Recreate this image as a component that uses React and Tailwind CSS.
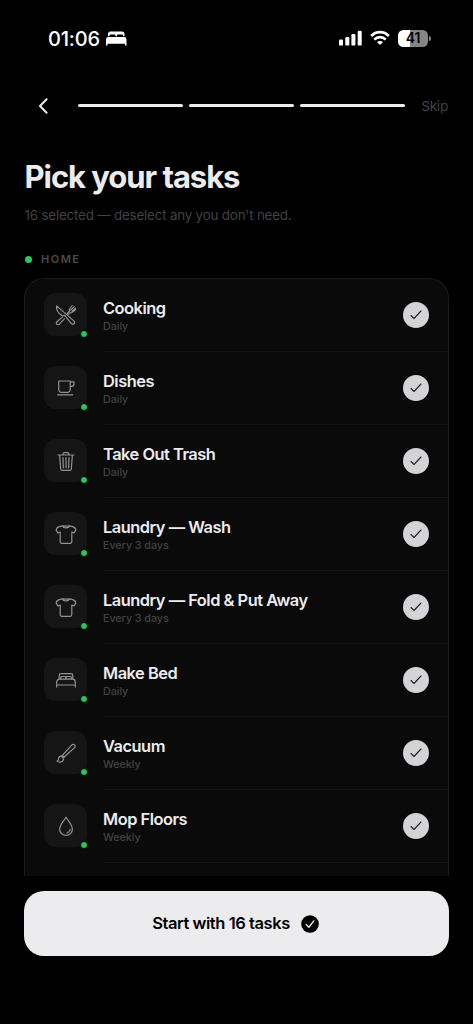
import React from "react";

const icons = {
  utensils: (
    <>
      <path d="M2.6 2.9C2 6.4 4.4 10.4 8.4 13L10.6 12.3L17.4 20.6a1.8 1.8 0 0 0 2.7-2.5Z" />
      <path d="M8.6 13.9L2.9 18.7a1.7 1.7 0 0 0 2.4 2.5L10.4 15.8" />
      <path d="M13.2 10.3L15.4 8.2C14.8 6.5 15.7 5.3 18.2 2.6M16.7 7.2L20 3.8M18 8.1L21.4 5.2M13.8 11.8L15.8 9.8C17.5 10.4 19 9.2 21.6 6.3" />
    </>
  ),
  cup: (
    <>
      <path d="M4.7 5H16.2V13.2A3.2 3.2 0 0 1 13 16.4H7.9A3.2 3.2 0 0 1 4.7 13.2ZM16.2 5.9H20V8.1A2.3 2.3 0 0 1 17.7 10.4H16.2M3.6 18.8H18.8" />
    </>
  ),
  trash: (
    <>
      <path d="M4.1 6H19.9M9.1 6V4.8A1.2 1.2 0 0 1 10.3 3.6H13.7A1.2 1.2 0 0 1 14.9 4.8V6M5.6 6L6.7 20A1.5 1.5 0 0 0 8.2 21.4H15.8A1.5 1.5 0 0 0 17.3 20L18.4 6M9 8.7L9.4 18.8M12 8.7V18.8M15 8.7L14.6 18.8" />
    </>
  ),
  shirt: (
    <>
      <path d="M8.3 3.8L5.3 4.6Q2.2 5.6 2.2 8.1L3.8 10.8L6.2 10.1V19.8A1.5 1.5 0 0 0 7.7 21.3H16.3A1.5 1.5 0 0 0 17.8 19.8V10.1L20.2 10.8L21.8 8.1Q21.8 5.6 18.7 4.6L15.7 3.8Q12 4.6 8.3 3.8ZM8.5 4C9.4 6.6 14.6 6.6 15.5 4" />
    </>
  ),
  bed: (
    <>
      <path d="M5.2 11V7.4A1.8 1.8 0 0 1 7 5.6H17A1.8 1.8 0 0 1 18.8 7.4V11M6.8 10.8V9.3Q6.8 8.5 7.6 8.5H11.1Q11.8 8.5 11.8 9.3V10.8M12.2 10.8V9.3Q12.2 8.5 13 8.5H16.4Q17.2 8.5 17.2 9.3V10.8M2.7 19.1V14A2.8 2.8 0 0 1 5.5 11.2H18.5A2.8 2.8 0 0 1 21.3 14V19.1M2.7 17H21.3" />
    </>
  ),
  brush: (
    <>
      <path d="M8.4 14.4L17.9 3.9A1.6 1.6 0 0 1 20.6 6.6L10 16.2Z" />
      <path d="M8 15.3C5.5 14.8 4.2 16.4 4.5 18.5Q4.2 19.9 3 20.1C5.4 22 9.5 21.2 9.6 17.5" />
      <path d="M8.4 14.4Q7.4 15.3 8.2 16.3Q9.1 17.1 10 16.2" />
    </>
  ),
  drop: (
    <>
      <path d="M12 3.2C9.6 7.2 5.6 11.1 5.6 15.2A6.4 6.2 0 0 0 18.4 15.2C18.4 11.1 14.4 7.2 12 3.2Z" />
      <path d="M16.3 15.3C16.2 17.5 14.7 19 12.5 19.1C13.6 18.2 14.9 17 16.3 15.3Z" strokeWidth="0.8" />
    </>
  ),
};

const tasks = [
  ["Cooking", "Daily", "utensils"],
  ["Dishes", "Daily", "cup"],
  ["Take Out Trash", "Daily", "trash"],
  ["Laundry — Wash", "Every 3 days", "shirt"],
  ["Laundry — Fold & Put Away", "Every 3 days", "shirt"],
  ["Make Bed", "Daily", "bed"],
  ["Vacuum", "Weekly", "brush"],
  ["Mop Floors", "Weekly", "drop"],
];

function StatusBar() {
  return (
    <div className="flex h-[76px] items-center pr-[42px] pl-12 text-white">
      <span className="pt-px text-[20px] leading-6 font-medium tracking-[-0.2px]">01:06</span>
      <svg className="ml-[6px] h-[15px] w-[21px]" viewBox="0 0 21 15" fill="currentColor">
        <path d="M2 5.3V3A2.5 2.5 0 0 1 4.5.5H16A2.5 2.5 0 0 1 18.5 3V5.3H17V4.3Q17 3.4 16 3.4H12Q11 3.4 11 4.3V5.3H9.5V4.3Q9.5 3.4 8.5 3.4H4.5Q3.5 3.4 3.5 4.3V5.3Z" />
        <path d="M0 8.5A2.4 2.4 0 0 1 2.4 6.1H18.1A2.4 2.4 0 0 1 20.5 8.5V14.5H19V12.8H1.5V14.5H0Z" />
      </svg>
      <div className="ml-auto flex items-center">
        <svg className="h-4 w-[23px]" viewBox="0 0 23 16" fill="currentColor">
          <rect x="0" y="9.6" width="4" height="6" rx="1.2" />
          <rect x="6.3" y="7" width="4" height="8.6" rx="1.2" />
          <rect x="12.4" y="4" width="4" height="11.6" rx="1.2" />
          <rect x="18.7" y="0.8" width="4" height="14.8" rx="1.2" />
        </svg>
        <svg className="ml-2 h-4 w-5" viewBox="0 0 20 16" fill="none" stroke="currentColor" strokeWidth="2.7">
          <path d="M1.2 6C6 .9 14 .9 18.8 6" />
          <path d="M4.3 9.6C7.4 6.4 12.6 6.4 15.7 9.6" />
          <path d="M10 15.1L7 12.1Q10 9.8 13 12.1Z" fill="currentColor" stroke="none" />
        </svg>
        <div className="ml-2 flex h-[17px] w-[30px] items-center justify-center rounded-[5.5px] bg-linear-to-r from-white from-41% to-[#858585] to-41%">
          <span className="text-[14px] leading-none font-semibold tracking-[-0.2px] text-black">41</span>
        </div>
        <div className="ml-px h-[5px] w-[2px] rounded-r-full bg-[#858585]" />
      </div>
    </div>
  );
}

function TaskRow({ name, freq, icon }) {
  return (
    <div className="flex h-[73px] shrink-0 pl-[19px]">
      <div className="relative mt-[14.5px] flex size-[43px] shrink-0 items-center justify-center rounded-[12px] bg-[#151515]">
        <svg
          className="size-6 text-[#929292]"
          viewBox="0 0 24 24"
          fill="none"
          stroke="currentColor"
          strokeWidth="1.2"
          strokeLinecap="round"
          strokeLinejoin="round"
        >
          {icons[icon]}
        </svg>
        <span className="absolute -right-[1px] -bottom-[1.5px] size-2 rounded-full border border-[#070a08] bg-[#29c760]" />
      </div>
      <div className="ml-4 flex flex-1 border-b border-[#131313]">
        <div className="flex-1 pt-[18.5px]">
          <div className="text-[16.4px] leading-[22px] font-semibold tracking-[-0.48px] text-[#ececee]">{name}</div>
          <div className="mt-[0.5px] text-[10.8px] leading-[14px] font-medium tracking-[-0.08px] text-[#414143]">{freq}</div>
        </div>
        <div className="mt-[23.5px] mr-[19px] flex size-[26px] items-center justify-center rounded-full bg-[#d4d4d8]">
          <svg className="size-3" viewBox="0 0 12 12" fill="none" stroke="#242426" strokeWidth="1.1" strokeLinecap="round" strokeLinejoin="round">
            <path d="M1 6.5L4 9.5L11 2" />
          </svg>
        </div>
      </div>
    </div>
  );
}

export default function App() {
  return (
    <div className="flex h-screen w-full flex-col overflow-hidden bg-black font-['Inter',sans-serif]">
      <StatusBar />
      <header className="flex h-[59px] items-center pr-[25px] pl-[38px]">
        <svg className="h-4 w-[10px]" viewBox="0 0 10 16" fill="none" stroke="#ececee" strokeWidth="2" strokeLinecap="round" strokeLinejoin="round">
          <path d="M8.6 1.3L2 8L8.6 14.7" />
        </svg>
        <div className="ml-[30.3px] flex flex-1 gap-[6px]">
          <span className="h-[3px] flex-1 rounded-full bg-[#ececee]" />
          <span className="h-[3px] flex-1 rounded-full bg-[#ececee]" />
          <span className="h-[3px] flex-1 rounded-full bg-[#ececee]" />
        </div>
        <span className="ml-4 text-[13.7px] leading-5 tracking-[-0.28px] text-[#414143]">Skip</span>
      </header>
      <main className="flex h-[741px] flex-col overflow-hidden px-6 pt-[21px]">
        <h1 className="pl-[0.5px] text-[31px] leading-[42px] font-bold tracking-[-1.05px] text-[#ececee]">Pick your tasks</h1>
        <p className="mt-[7px] pl-[0.5px] text-[13.4px] leading-5 tracking-[-0.2px] text-[#414143]">16 selected — deselect any you don't need.</p>
        <div className="mt-[26px] flex h-4 items-center gap-[9.5px] pl-[0.5px]">
          <span className="size-[7px] rounded-full bg-[#29c760]" />
          <span className="text-[11px] leading-4 font-semibold tracking-[1.5px] text-[#4b4b4e]">HOME</span>
        </div>
        <section className="mt-[10.5px] flex flex-1 flex-col overflow-hidden rounded-t-[20px] border border-b-0 border-[#1b1b1b] bg-[#0a0a0a]">
          {tasks.map(([name, freq, icon]) => (
            <TaskRow key={name} name={name} freq={freq} icon={icon} />
          ))}
        </section>
      </main>
      <footer className="px-6 pt-[15px]">
        <button className="flex h-[65px] w-full items-center justify-center gap-[11px] rounded-[20px] bg-[#ececee] pr-[2px] text-[16.5px] font-semibold tracking-[-0.43px] text-black">
          Start with 16 tasks
          <svg className="size-[18px]" viewBox="0 0 18 18" fill="none">
            <circle cx="9" cy="9" r="8.8" fill="#000" />
            <path d="M5.2 9.5L7.9 12.2L12.8 5.9" stroke="#ececee" strokeWidth="1.4" strokeLinecap="round" strokeLinejoin="round" />
          </svg>
        </button>
      </footer>
    </div>
  );
}
